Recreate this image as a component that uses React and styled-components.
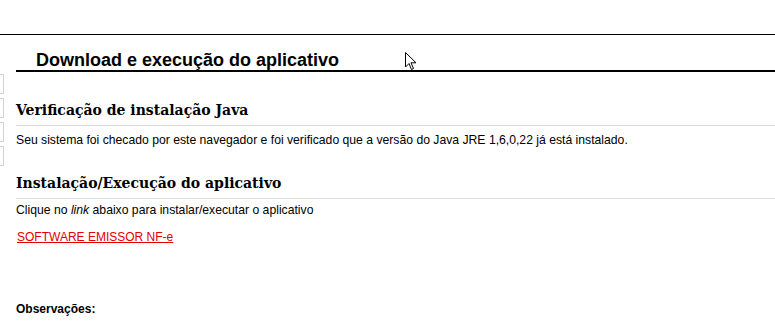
import React from "react";
import styled, { createGlobalStyle } from "styled-components";

const Global = createGlobalStyle`
  html, body { margin: 0; padding: 0; background: #fff; }
  body { font-family: "Liberation Sans", Arial, sans-serif; color: #000; width: 775px; height: 328px; overflow: hidden; }
`;

const Page = styled.div`
  position: relative;
  width: 775px;
  height: 328px;
  padding-top: 34px;
  box-sizing: border-box;
`;

const TopRule = styled.div`
  height: 1px;
  background: #000;
`;

const Body = styled.div`
  display: flex;
`;

const Gutter = styled.div`
  width: 16px;
  padding-top: 39px;
  display: flex;
  flex-direction: column;
  gap: 4px;
`;

const GutterBox = styled.div`
  width: 3px;
  height: 18px;
  border: 1px solid #d4d4d4;
  border-left: none;
`;

const Main = styled.div`
  flex: 1;
`;

const PageTitle = styled.h1`
  margin: 0;
  padding: 15px 0 0 20px;
  height: 37px;
  box-sizing: border-box;
  font-family: "Liberation Sans", Arial, sans-serif;
  font-size: 18px;
  font-weight: bold;
  line-height: 20px;
  border-bottom: 2px solid #000;
`;

const Section = styled.section`
  padding-top: ${p => p.$top}px;
`;

const SectionTitle = styled.h2`
  margin: 0;
  font-family: "DejaVu Serif", serif;
  font-size: 14px;
  font-weight: bold;
  line-height: 18px;
  padding-bottom: 6px;
  border-bottom: 1px solid #dcdcdc;
`;

const Text = styled.p`
  margin: 0;
  padding-top: ${p => p.$top || 0}px;
  font-size: 12.2px;
  line-height: 14px;
  em { font-style: italic; }
`;

const LinkRow = styled.div`
  margin-top: 13px;
  padding-left: 1px;
  font-size: 12px;
  line-height: 14px;
`;

const Link = styled.a`
  color: #e00000;
  text-decoration: underline;
`;

const Notes = styled.div`
  margin-top: 58px;
  font-size: 12px;
  font-weight: bold;
  line-height: 14px;
`;

const Cursor = styled.svg`
  position: absolute;
  left: 405px;
  top: 52px;
`;

export default function App() {
  return (
    <>
      <Global />
      <Page>
        <TopRule />
        <Body>
          <Gutter>
            <GutterBox />
            <GutterBox />
            <GutterBox />
            <GutterBox />
          </Gutter>
          <Main>
            <PageTitle>Download e execução do aplicativo</PageTitle>
            <Section $top={29}>
              <SectionTitle>Verificação de instalação Java</SectionTitle>
              <Text $top={7}>
                Seu sistema foi checado por este navegador e foi verificado que a versão do Java JRE 1,6,0,22 já está instalado.
              </Text>
            </Section>
            <Section $top={27}>
              <SectionTitle>Instalação/Execução do aplicativo</SectionTitle>
              <Text $top={4}>
                Clique no <em>link</em> abaixo para instalar/executar o aplicativo
              </Text>
              <LinkRow>
                <Link href="#">SOFTWARE EMISSOR NF-e</Link>
              </LinkRow>
            </Section>
            <Notes>Observações:</Notes>
          </Main>
        </Body>
        <Cursor width="12" height="19" viewBox="0 0 12 19">
          <path d="M0.5 0.5 L0.5 15 L4 11.5 L6.5 17.5 L8.5 16.5 L6 10.8 L11 10.8 Z" fill="#fff" stroke="#000" strokeWidth="1" strokeLinejoin="miter" />
        </Cursor>
      </Page>
    </>
  );
}
